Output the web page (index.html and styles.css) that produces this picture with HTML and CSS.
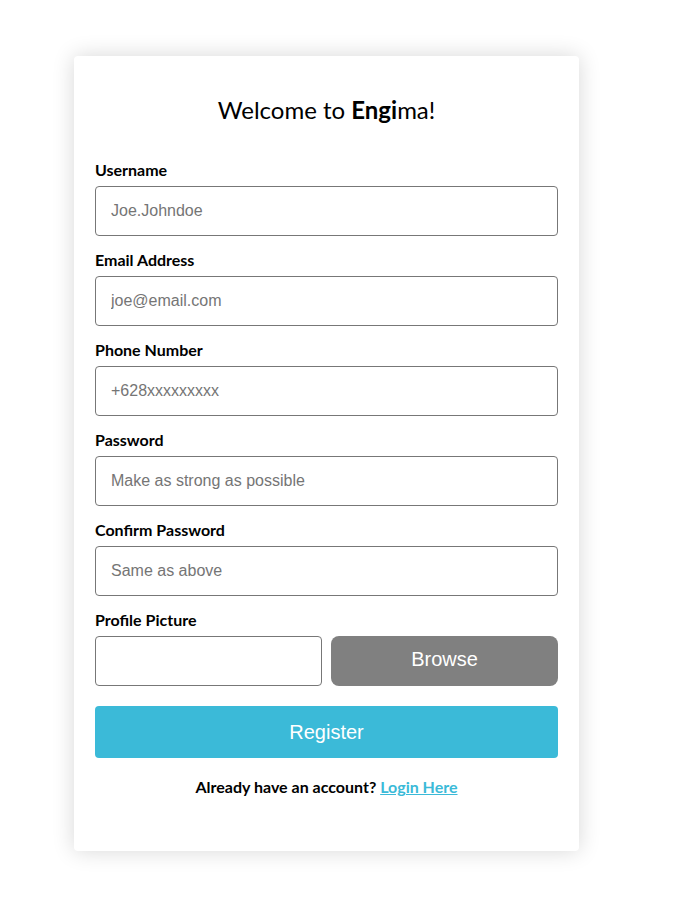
FILE: index.html
```html
<!DOCTYPE html>
<html lang="en">
<head>
<meta charset="utf-8">
<title>Register - Engigma</title>
<link rel="stylesheet" href="styles.css">
</head>
<body>
<main class="card">
  <h1 class="title">Welcome to <strong>Engi</strong>ma!</h1>
  <form class="form">
    <div class="field">
      <label class="label" for="username">Username</label>
      <input class="input" id="username" type="text" placeholder="Joe.Johndoe">
    </div>
    <div class="field">
      <label class="label" for="email">Email Address</label>
      <input class="input" id="email" type="email" placeholder="joe@email.com">
    </div>
    <div class="field">
      <label class="label" for="phone">Phone Number</label>
      <input class="input" id="phone" type="text" placeholder="+628xxxxxxxxx">
    </div>
    <div class="field">
      <label class="label" for="password">Password</label>
      <input class="input" id="password" type="password" placeholder="Make as strong as possible">
    </div>
    <div class="field">
      <label class="label" for="confirm">Confirm Password</label>
      <input class="input" id="confirm" type="password" placeholder="Same as above">
    </div>
    <div class="field field-last">
      <label class="label" for="picture">Profile Picture</label>
      <div class="file-row">
        <input class="input" id="picture" type="text">
        <button class="browse" type="button">Browse</button>
      </div>
    </div>
    <button class="register" type="button">Register</button>
    <p class="footer">Already have an account? <a class="link" href="#">Login Here</a></p>
  </form>
</main>
</body>
</html>
```
FILE: styles.css
```css
html, body {
  margin: 0;
  padding: 0;
  background: #ffffff;
}
body {
  padding: 56px 0 52px 74px;
  font-family: Lato, "Noto Sans", sans-serif;
}
.card {
  box-sizing: border-box;
  width: 505px;
  height: 795px;
  background: #ffffff;
  border-radius: 4px;
  box-shadow: 0 0 22px rgba(0, 0, 0, 0.16);
  padding: 39px 21px 0 21px;
}
.title {
  margin: 0 0 37px 0;
  font-size: 24px;
  line-height: 29px;
  font-weight: 400;
  text-align: center;
  color: #000;
}
.title strong {
  font-weight: 700;
}
.form {
  display: flex;
  flex-direction: column;
}
.field {
  display: flex;
  flex-direction: column;
  gap: 7px;
  margin-bottom: 15px;
}
.field-last {
  margin-bottom: 20px;
}
.label {
  font-size: 16px;
  line-height: 18px;
  font-weight: 700;
  color: #000;
}
.input {
  box-sizing: border-box;
  width: 100%;
  height: 50px;
  border: 1px solid #777;
  border-radius: 4px;
  padding: 0 15px;
  font-family: "Liberation Sans", Arial, sans-serif;
  font-size: 16px;
  color: #222;
  background: #fff;
  outline: none;
}
.input::placeholder {
  color: #757575;
}
.file-row {
  display: grid;
  grid-template-columns: minmax(0, 1fr) minmax(0, 1fr);
  gap: 9px;
}
.browse {
  height: 50px;
  border: none;
  border-radius: 8px;
  background: #808080;
  color: #fff;
  font-family: "Liberation Sans", Arial, sans-serif;
  font-size: 20px;
  padding: 0 0 3px 0;
}
.register {
  height: 52px;
  border: none;
  border-radius: 4px;
  background: #3bbad8;
  color: #fff;
  font-family: "Liberation Sans", Arial, sans-serif;
  font-size: 20px;
  margin-bottom: 20px;
}
.footer {
  margin: 0;
  font-size: 16px;
  line-height: 18px;
  font-weight: 700;
  text-align: center;
  color: #000;
}
.link {
  color: #3bbad8;
  text-decoration: underline;
}
```
